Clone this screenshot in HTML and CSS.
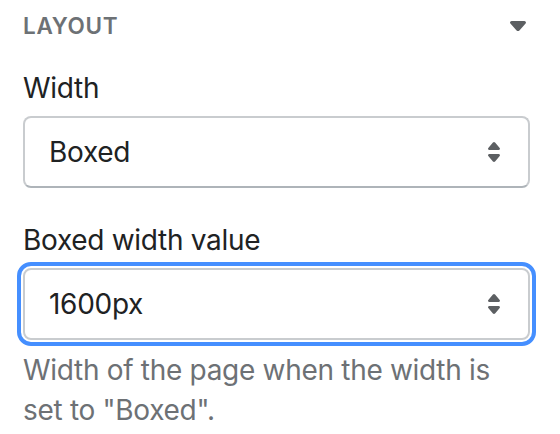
FILE: index.html
```html
<!DOCTYPE html>
<html lang="en">
<head>
  <meta charset="UTF-8" />
  <title>Layout settings</title>
  <link rel="stylesheet" href="styles.css">
</head>
<body>
  <div class="panel">
    <div class="panel-header">
      <h2>Layout</h2>
      <svg class="caret" viewBox="0 0 20 20" width="40" height="40">
        <path d="M13.098 8H6.902c-.751 0-1.172.754-.708 1.268L9.292 12.7c.36.399 1.055.399 1.416 0l3.098-3.433C14.27 8.754 13.849 8 13.098 8Z"/>
      </svg>
    </div>

    <div class="field">
      <label class="field-label">Width</label>
      <div class="select">
        <span class="select-value">Boxed</span>
        <svg class="select-icon" viewBox="0 0 20 20" width="40" height="40">
          <path d="M7.676 9h4.648c.563 0 .879-.603.53-1.014l-2.323-2.746a.708.708 0 0 0-1.062 0l-2.324 2.746c-.347.411-.032 1.014.531 1.014Zm4.648 2h-4.648c-.563 0-.878.603-.53 1.014l2.323 2.746c.27.317.792.317 1.062 0l2.323-2.746c.349-.411.033-1.014-.53-1.014Z"/>
        </svg>
      </div>
    </div>

    <div class="field">
      <label class="field-label">Boxed width value</label>
      <div class="select focused">
        <span class="select-value">1600px</span>
        <svg class="select-icon" viewBox="0 0 20 20" width="40" height="40">
          <path d="M7.676 9h4.648c.563 0 .879-.603.53-1.014l-2.323-2.746a.708.708 0 0 0-1.062 0l-2.324 2.746c-.347.411-.032 1.014.531 1.014Zm4.648 2h-4.648c-.563 0-.878.603-.53 1.014l2.323 2.746c.27.317.792.317 1.062 0l2.323-2.746c.349-.411.033-1.014-.53-1.014Z"/>
        </svg>
      </div>
      <p class="help-text">Width of the page when the width is set to "Boxed".</p>
    </div>
  </div>
</body>
</html>
```

FILE: styles.css
```css
* {
  box-sizing: border-box;
}

body {
  margin: 0;
  padding: 0;
  background: #ffffff;
  font-family: Inter, "Liberation Sans", sans-serif;
  color: #202223;
  letter-spacing: -0.3px;
}

.panel {
  width: 560px;
  padding: 8px 30px 0 23px;
}

.panel-header {
  display: flex;
  justify-content: space-between;
  align-items: center;
  height: 34px;
}

.panel-header h2 {
  margin: 0;
  font-size: 22.5px;
  font-weight: 600;
  letter-spacing: 0.7px;
  text-transform: uppercase;
  color: #6d7175;
}

.caret {
  fill: #5c5f62;
  margin-right: -8px;
}

.field {
  margin-top: 26px;
}

.field + .field {
  margin-top: 32px;
}

.field-label {
  display: block;
  font-size: 28px;
  line-height: 40px;
  margin-bottom: 8px;
}

.select {
  display: flex;
  align-items: center;
  justify-content: space-between;
  height: 72px;
  padding: 0 14px 0 24px;
  border: 2px solid #c9cccf;
  border-bottom-color: #aeb4b9;
  border-radius: 8px;
  font-size: 28px;
  line-height: 40px;
}

.select.focused {
  border-color: #c9cccf;
  outline: 4px solid #458fff;
  outline-offset: 2px;
}

.select-icon {
  fill: #5c5f62;
}

.help-text {
  margin: 10px 0 0;
  font-size: 28px;
  line-height: 40px;
  color: #6d7175;
}
```
